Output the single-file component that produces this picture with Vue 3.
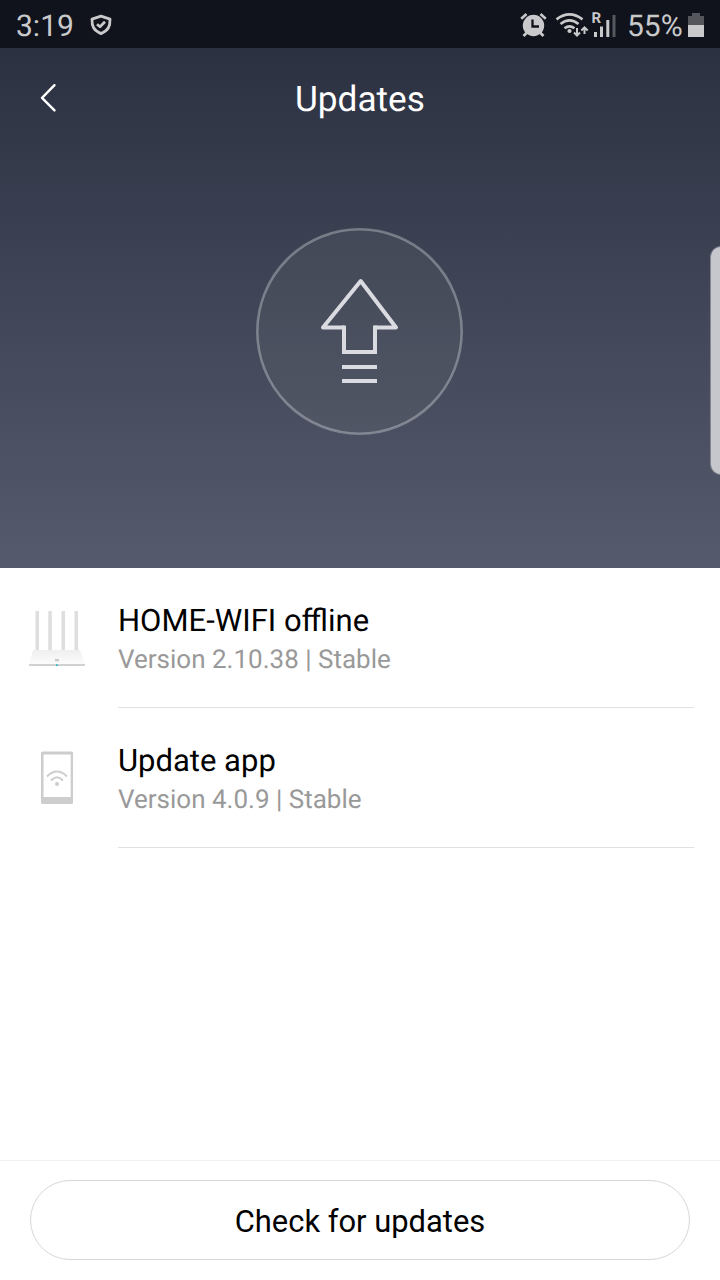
<script setup>
const items = [
  { icon: 'router', title: 'HOME-WIFI offline', version: 'Version 2.10.38 | Stable' },
  { icon: 'phone', title: 'Update app', version: 'Version 4.0.9 | Stable' },
]
</script>

<template>
  <main class="screen">
    <header class="status">
      <span class="clock">3:19</span>
      <svg class="shield" width="24" height="24" viewBox="0 0 24 24" fill="none" stroke="#c9c9cb" stroke-linejoin="round">
        <path d="M12 3.200 L21 6.200 C21.200 13 19.500 17.500 12 20.600 C4.500 17.500 2.800 13 3 6.200 Z" stroke-width="2.800" />
        <path d="M8 11.200 L11 13.800 L16 8.800" stroke-width="2.700" />
      </svg>
      <svg class="signals" width="108" height="30" viewBox="0 0 108 30">
        <g fill="none" stroke="#c9c9cb">
          <path d="M2.200 8.700 L7.500 4 M21.500 4 L26.800 8.700" stroke-width="2.600" />
          <path d="M8 22.500 L4.500 26 M21 22.500 L24.500 26" stroke-width="2.800" />
          <path d="M37.500 9.400 Q50.500 -0.500 63.500 9.400 M41.500 14 Q50.500 6.800 59.500 14 M45.500 18.200 Q50.500 14.500 55.500 18.200" stroke-width="2.600" />
          <path d="M58 18 V25 M55 22.500 L58 25.500 L61 22.500 M65.500 24 V17.500 M62.300 20.500 L65.500 17.300 L68.700 20.500" stroke-width="2" />
        </g>
        <circle cx="14.500" cy="15.500" r="10.700" fill="#c9c9cb" />
        <path d="M13.500 9.500 V16.500 H20" fill="none" stroke="#10131b" stroke-width="2.300" />
        <circle cx="50.500" cy="21" r="2.100" fill="#c9c9cb" />
        <path d="M75 22 h3 v5 h-3z M81 16.500 h3 v10.500 h-3z M87.300 10 h3 v17 h-3z" fill="#c9c9cb" />
        <path d="M93.500 5 h3 v22 h-3z" fill="#55585e" />
        <text x="72.500" y="13" class="roam">R</text>
      </svg>
      <span class="percent">55%</span>
      <svg class="battery" width="16" height="24" viewBox="0 0 16 24">
        <path d="M4 3 V0 H12 V3 H16 V12 H0 V3 Z" fill="#55565b" />
        <path d="M0 12 H16 V24 H0 Z" fill="#c9c9cb" />
      </svg>
    </header>

    <section class="hero">
      <div class="bar">
        <svg class="back" width="24" height="32" viewBox="0 0 24 32" fill="none" stroke="#fff" stroke-width="2.400" stroke-linecap="round" stroke-linejoin="round">
          <path d="M15.500 3.200 L3 15.800 L15.500 28.400" />
        </svg>
        <h1>Updates</h1>
      </div>
      <svg class="emblem" width="208" height="208" viewBox="0 0 208 208" fill="none">
        <circle cx="103.500" cy="103.500" r="102.200" fill="#808884" fill-opacity=".12" stroke="#fff" stroke-opacity=".3" stroke-width="2.600" />
        <g stroke="#dadbe0" stroke-width="4">
          <path d="M88 99.500 H67 L104.700 53 L140 99.500 H119" stroke-linejoin="round" />
          <path d="M88 97.500 V124 H119 V97.500" />
          <path d="M86 139 H121 M86 153 H121" />
        </g>
      </svg>
      <div class="edge"></div>
    </section>

    <ul class="list">
      <li v-for="item in items" :key="item.icon">
        <svg v-if="item.icon === 'router'" width="80" height="90" viewBox="0 0 80 90">
          <defs>
            <linearGradient id="shell" x2="0" y2="1">
              <stop stop-color="#efefef" />
              <stop offset="1" stop-color="#fbfbfb" />
            </linearGradient>
          </defs>
          <path d="M15.500 21 h3.500 v40 h-3.500z M28.300 21 h3.500 v40 h-3.500z M41.500 21 h3.500 v40 h-3.500z M54.500 21 h3.500 v40 h-3.500z" fill="#dedede" />
          <path d="M13 60 H60 L65 74 H9 Z" fill="url(#shell)" />
          <path d="M9 74 H65 V75.500 Q64.500 76 64 76 H10 Q9 76 9 75 Z" fill="#d0d2d2" />
          <rect x="35" y="69" width="4" height="2.300" fill="#c9c9c9" />
          <rect x="36" y="74.300" width="2" height="1.700" fill="#38bbcb" />
        </svg>
        <svg v-else width="80" height="90" viewBox="0 0 80 90">
          <path fill-rule="evenodd" d="M22.500 16.500 H51.500 Q53 16.500 53 18 V67.500 Q53 69 51.500 69 H22.500 Q21 69 21 67.500 V18 Q21 16.500 22.500 16.500 Z M23.500 19.500 V62 H50.700 V19.500 Z" fill="#cdcdcd" />
          <path d="M27 41.500 Q37 31.500 47 41.500 M31 45.500 Q37 39 43 45.500" fill="none" stroke="#cdcdcd" stroke-width="1.900" />
          <circle cx="37" cy="49" r="2" fill="#cdcdcd" />
        </svg>
        <div class="copy">
          <h2>{{ item.title }}</h2>
          <p>{{ item.version }}</p>
        </div>
      </li>
    </ul>

    <footer><button type="button">Check for updates</button></footer>
  </main>
</template>

<style>
body { margin: 0; background: #fff; }
</style>

<style scoped>
* { box-sizing: border-box; }
.screen { width: 720px; height: 1280px; display: flex; flex-direction: column; background: #fff; color: #000; font-family: Roboto, "Noto Sans", sans-serif; overflow: hidden; text-rendering: geometricPrecision; }
.status { height: 48px; flex: none; display: flex; padding: 0 16px; background: #10131b; color: #c9c9cb; font-size: 30px; line-height: 54px; }
.clock { width: 73px; }
.percent { width: 61px; text-align: left; font-size: 30px; white-space: nowrap; }
.shield { margin-top: 13px; }
.signals { margin: 10px 0 0 406px; flex: none; }
.roam { font: 700 15px Roboto, sans-serif; fill: #c9c9cb; }
.battery { margin-top: 13px; flex: none; }
.hero { position: relative; height: 520px; flex: none; display: flex; flex-direction: column; background: linear-gradient(#2c3142, #555a6d); }
.bar { height: 100px; position: relative; display: flex; justify-content: center; }
.back { position: absolute; left: 39px; top: 34px; }
h1 { margin: 0; color: #fff; font-size: 35.200px; line-height: 103px; font-weight: 400; }
.emblem { margin: 80px 0 0 256px; }
.edge { position: absolute; right: -12px; top: 198px; width: 22px; height: 229px; border-radius: 12px; background: #c6c7cd; border: 1px solid #858894; }
.list { list-style: none; margin: 0; padding: 0; flex: 1; }
li { display: flex; height: 140px; padding-left: 20px; }
li svg { flex: none; margin-top: 22px; }
li:nth-child(2) svg { margin-top: 27px; }
.copy { margin-left: 18px; width: 576px; height: 140px; padding-top: 34px; border-bottom: 1px solid #e0e0e0; }
h2 { margin: 0; font-size: 31px; line-height: 38px; font-weight: 400; }
p { margin: 0; font-size: 26px; line-height: 40px; color: #999; }
footer { height: 120px; flex: none; border-top: 1px solid #f0f0f0; padding: 19px 30px; }
button { width: 660px; height: 80px; border: 1px solid #d8d8d8; border-radius: 40px; background: #fff; color: #000; font: 400 30.900px Roboto, sans-serif; padding: 2px 0 0; }
</style>
